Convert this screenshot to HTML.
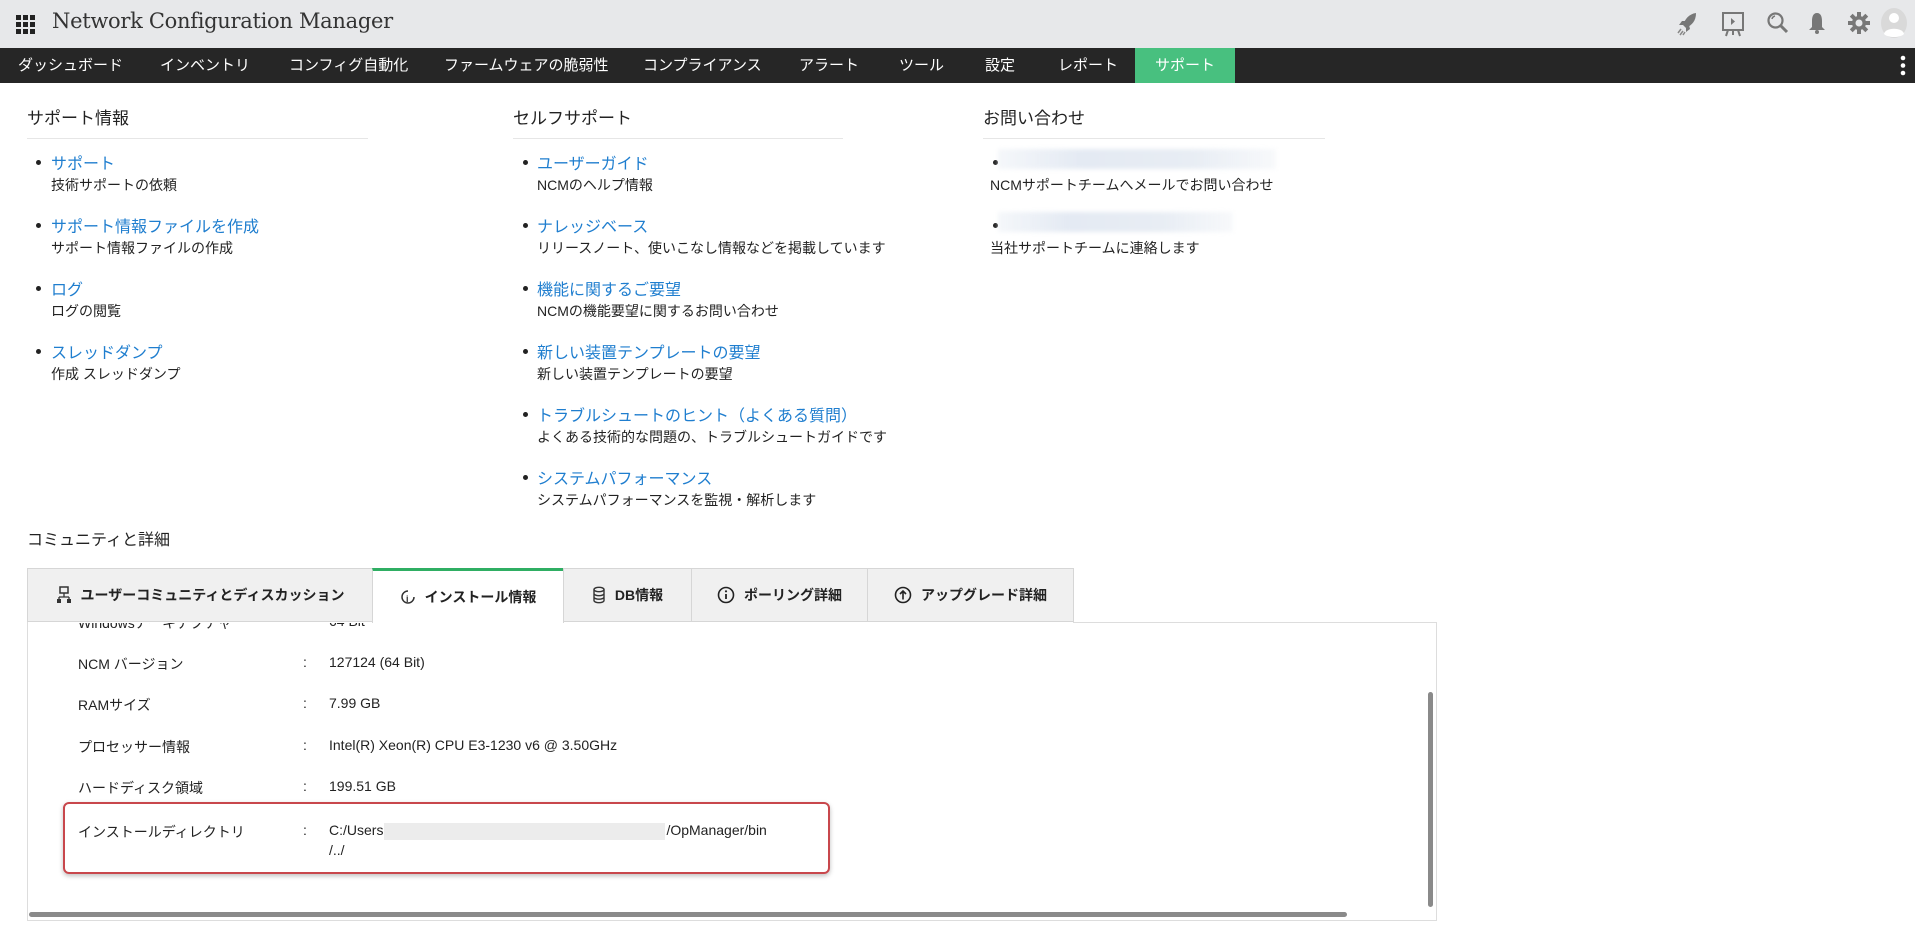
<!DOCTYPE html>
<html><head><meta charset="utf-8"><style>
*{margin:0;padding:0;box-sizing:border-box}
body{width:1915px;height:948px;overflow:hidden;background:#fff;font-family:"Liberation Sans","Noto Sans CJK JP",sans-serif;color:#222;position:relative}
.hdr{position:absolute;left:0;top:0;width:1915px;height:48px;background:#e7e8ea}
.title{position:absolute;left:52px;top:9px;font-family:"DejaVu Serif","Liberation Serif",serif;font-size:21px;font-weight:300;color:#333;letter-spacing:-0.3px}
.grid{position:absolute;left:16px;top:15px;width:19px;height:19px}
.grid i{position:absolute;width:5px;height:5px;background:#222}
.nav{position:absolute;left:0;top:48px;width:1915px;height:35px;background:#262626}
.nav span{position:absolute;top:0;height:35px;line-height:35px;color:#fff;font-size:15px}
.nav .act{background:#48c07f;text-align:center;width:100px;left:1135px}
.sec{position:absolute;font-size:17px;color:#222}
.line{position:absolute;height:1px;background:#e6e6e6}
.lk{position:absolute;font-size:16px;color:#1f7ecf}
.ds{position:absolute;font-size:14px;color:#222}
.bl{position:absolute;width:5px;height:5px;border-radius:50%;background:#222}
.blur{position:absolute;height:20px;background:linear-gradient(90deg,rgba(238,242,247,.6),#e4eaf3 30%,#e8edf4 70%,rgba(240,243,247,.5));filter:blur(2px)}
.tab{position:absolute;top:568px;height:54px;background:#f0f0f0;border:1px solid #d6d6d6;font-size:14px;font-weight:bold;color:#222;display:flex;align-items:center;justify-content:center;gap:9px}
.tab.a{background:#fff;border-top:3px solid #2fae63;border-bottom:none;height:55px}
.box{position:absolute;left:27px;top:622px;width:1410px;height:299px;border:1px solid #ddd;border-top:none}
.lb{position:absolute;left:78px;font-size:14px;color:#222}
.co{position:absolute;left:303px;font-size:14px}
.va{position:absolute;left:329px;font-size:14px;color:#222}
</style></head><body>
<div class="hdr">
<div class="grid"><i style="left:0;top:0"></i><i style="left:7px;top:0"></i><i style="left:14px;top:0"></i><i style="left:0;top:7px"></i><i style="left:7px;top:7px"></i><i style="left:14px;top:7px"></i><i style="left:0;top:14px"></i><i style="left:7px;top:14px"></i><i style="left:14px;top:14px"></i></div>
<div class="title">Network Configuration Manager</div>
<svg style="position:absolute;left:1676px;top:11px" width="24" height="26" viewBox="0 0 24 26"><path d="M20 2 C13 3 9 8 7 14 L10 17 C16 14 20 10 20 2Z" fill="#777"/><path d="M7 14 L3 14 L6 10 L10 10Z M10 17 L10 21 L14 18 L13 14Z" fill="#777"/><path d="M5 18 L2 22 M7 20 L4 24 M9 21 L7 24" stroke="#888" stroke-width="1.5"/></svg>
<svg style="position:absolute;left:1720px;top:10px" width="26" height="28" viewBox="0 0 26 28"><rect x="3" y="3" width="20" height="17" fill="none" stroke="#777" stroke-width="2"/><path d="M11 8 L15 11.5 L11 15Z" fill="#777"/><path d="M2 3 H24 M8 20 L6 26 M18 20 L20 26 M13 20 V25" stroke="#777" stroke-width="2"/></svg>
<svg style="position:absolute;left:1766px;top:11px" width="24" height="24" viewBox="0 0 24 24"><circle cx="9.5" cy="9.5" r="7" fill="none" stroke="#777" stroke-width="2.2"/><path d="M14.5 14.5 L21 21" stroke="#777" stroke-width="3"/><path d="M6 8 A4 4 0 0 1 9 5" stroke="#777" stroke-width="1.5" fill="none"/></svg>
<svg style="position:absolute;left:1808px;top:11px" width="18" height="24" viewBox="0 0 18 24"><path d="M9 2 C5 2 4 6 4 10 L4 16 L1 19 L17 19 L14 16 L14 10 C14 6 13 2 9 2Z" fill="#777"/><circle cx="9" cy="21" r="2" fill="#777"/></svg>
<svg style="position:absolute;left:1847px;top:11px" width="24" height="24" viewBox="0 0 24 24"><g fill="#777"><circle cx="12" cy="12" r="7"/><rect x="10" y="1" width="4" height="22"/><rect x="1" y="10" width="22" height="4"/><rect x="10" y="1" width="4" height="22" transform="rotate(45 12 12)"/><rect x="10" y="1" width="4" height="22" transform="rotate(-45 12 12)"/></g><circle cx="12" cy="12" r="3.5" fill="#e7e8ea"/></svg>
<svg style="position:absolute;left:1880px;top:7px" width="28" height="32" viewBox="0 0 28 32"><ellipse cx="14" cy="16" rx="13" ry="15" fill="#d9d9d9"/><circle cx="14" cy="11" r="5" fill="#fff"/><path d="M4 27 C5 20 23 20 24 27 C20 31 8 31 4 27Z" fill="#fff"/></svg>
</div>
<div class="nav">
<span style="left:18px">ダッシュボード</span><span style="left:160px">インベントリ</span><span style="left:289px">コンフィグ自動化</span><span style="left:444px">ファームウェアの脆弱性</span><span style="left:643px">コンプライアンス</span><span style="left:799px">アラート</span><span style="left:899px">ツール</span><span style="left:985px">設定</span><span style="left:1058px">レポート</span><span class="act">サポート</span>
<span style="left:1900px;top:0;width:5px"><svg width="6" height="35" viewBox="0 0 6 35"><circle cx="3" cy="10" r="2.3" fill="#fff"/><circle cx="3" cy="17.5" r="2.3" fill="#fff"/><circle cx="3" cy="25" r="2.3" fill="#fff"/></svg></span>
</div>

<div class="sec" style="left:27px;top:104px">サポート情報</div><div class="line" style="left:27px;top:138px;width:341px"></div>
<div class="sec" style="left:513px;top:104px">セルフサポート</div><div class="line" style="left:513px;top:138px;width:330px"></div>
<div class="sec" style="left:983px;top:104px">お問い合わせ</div><div class="line" style="left:983px;top:138px;width:342px"></div>

<div class="bl" style="left:36px;top:160px"></div><div class="lk" style="left:51px;top:150px">サポート</div><div class="ds" style="left:51px;top:175px">技術サポートの依頼</div>
<div class="bl" style="left:36px;top:223px"></div><div class="lk" style="left:51px;top:213px">サポート情報ファイルを作成</div><div class="ds" style="left:51px;top:238px">サポート情報ファイルの作成</div>
<div class="bl" style="left:36px;top:286px"></div><div class="lk" style="left:51px;top:276px">ログ</div><div class="ds" style="left:51px;top:301px">ログの閲覧</div>
<div class="bl" style="left:36px;top:349px"></div><div class="lk" style="left:51px;top:339px">スレッドダンプ</div><div class="ds" style="left:51px;top:364px">作成 スレッドダンプ</div>

<div class="bl" style="left:523px;top:160px"></div><div class="lk" style="left:537px;top:150px">ユーザーガイド</div><div class="ds" style="left:537px;top:175px">NCMのヘルプ情報</div>
<div class="bl" style="left:523px;top:223px"></div><div class="lk" style="left:537px;top:213px">ナレッジベース</div><div class="ds" style="left:537px;top:238px">リリースノート、使いこなし情報などを掲載しています</div>
<div class="bl" style="left:523px;top:286px"></div><div class="lk" style="left:537px;top:276px">機能に関するご要望</div><div class="ds" style="left:537px;top:301px">NCMの機能要望に関するお問い合わせ</div>
<div class="bl" style="left:523px;top:349px"></div><div class="lk" style="left:537px;top:339px">新しい装置テンプレートの要望</div><div class="ds" style="left:537px;top:364px">新しい装置テンプレートの要望</div>
<div class="bl" style="left:523px;top:412px"></div><div class="lk" style="left:537px;top:402px">トラブルシュートのヒント（よくある質問）</div><div class="ds" style="left:537px;top:427px">よくある技術的な問題の、トラブルシュートガイドです</div>
<div class="bl" style="left:523px;top:475px"></div><div class="lk" style="left:537px;top:465px">システムパフォーマンス</div><div class="ds" style="left:537px;top:490px">システムパフォーマンスを監視・解析します</div>

<div class="bl" style="left:993px;top:160px"></div><div class="blur" style="left:998px;top:149px;width:278px"></div><div class="ds" style="left:990px;top:175px">NCMサポートチームへメールでお問い合わせ</div>
<div class="bl" style="left:993px;top:223px"></div><div class="blur" style="left:998px;top:212px;width:235px"></div><div class="ds" style="left:990px;top:238px">当社サポートチームに連絡します</div>

<div class="sec" style="left:27px;top:526px;font-size:16px">コミュニティと詳細</div>

<div class="tab" style="left:27px;width:346px"><svg width="16" height="18" viewBox="0 0 16 18"><rect x="4" y="1" width="8" height="6" fill="none" stroke="#333" stroke-width="1.5"/><path d="M8 7 V11 M3 11 H13 M3 11 V13 M13 11 V13" stroke="#333" stroke-width="1.3" fill="none"/><rect x="1" y="13" width="4" height="4" fill="#333"/><rect x="11" y="13" width="4" height="4" fill="#333"/></svg>ユーザーコミュニティとディスカッション</div>
<div class="tab a" style="left:372px;width:192px"><svg width="16" height="18" viewBox="0 0 16 18"><path d="M14 9 A6 6 0 1 1 8 3" fill="none" stroke="#333" stroke-width="1.5"/><text x="6" y="14" font-size="9" font-weight="bold" font-family="Liberation Sans" fill="#333">i</text></svg>インストール情報</div>
<div class="tab" style="left:563px;width:129px"><svg width="14" height="18" viewBox="0 0 14 18"><ellipse cx="7" cy="3.5" rx="5" ry="2.2" fill="none" stroke="#333" stroke-width="1.4"/><path d="M2 3.5 V14.5 A5 2.2 0 0 0 12 14.5 V3.5 M2 7.5 A5 2.2 0 0 0 12 7.5 M2 11 A5 2.2 0 0 0 12 11" fill="none" stroke="#333" stroke-width="1.4"/></svg>DB情報</div>
<div class="tab" style="left:691px;width:177px"><svg width="18" height="18" viewBox="0 0 18 18"><circle cx="9" cy="9" r="7.5" fill="none" stroke="#222" stroke-width="1.6"/><path d="M9 8 V13" stroke="#222" stroke-width="1.8"/><circle cx="9" cy="5.3" r="1.1" fill="#222"/></svg>ポーリング詳細</div>
<div class="tab" style="left:867px;width:207px"><svg width="18" height="18" viewBox="0 0 18 18"><circle cx="9" cy="9" r="7.5" fill="none" stroke="#222" stroke-width="1.6"/><path d="M9 13.5 V5 M6 8 L9 5 L12 8" stroke="#222" stroke-width="1.6" fill="none"/></svg>アップグレード詳細</div>

<div class="box"></div>
<div style="position:absolute;left:1073px;top:622px;width:364px;height:1px;background:#ddd"></div>
<div style="position:absolute;left:78px;top:623px;width:400px;height:8px;overflow:hidden;font-size:14px"><span style="position:absolute;left:0;top:-10px">Windowsアーキテクチャ</span><span style="position:absolute;left:251px;top:-10px">64 Bit</span></div>
<div class="lb" style="top:654px">NCM バージョン</div><div class="co" style="top:654px">:</div><div class="va" style="top:654px">127124 (64 Bit)</div>
<div class="lb" style="top:695px">RAMサイズ</div><div class="co" style="top:695px">:</div><div class="va" style="top:695px">7.99 GB</div>
<div class="lb" style="top:737px">プロセッサー情報</div><div class="co" style="top:737px">:</div><div class="va" style="top:737px">Intel(R) Xeon(R) CPU E3-1230 v6 @ 3.50GHz</div>
<div class="lb" style="top:778px">ハードディスク領域</div><div class="co" style="top:778px">:</div><div class="va" style="top:778px">199.51 GB</div>
<div style="position:absolute;left:63px;top:802px;width:767px;height:72px;border:2px solid #c8474c;border-radius:6px;box-shadow:0 2px 5px rgba(0,0,0,.25)"></div>
<div class="lb" style="top:822px">インストールディレクトリ</div><div class="co" style="top:822px">:</div><div class="va" style="top:822px">C:/Users<span style="display:inline-block;width:281px;height:17px;background:#ececec;vertical-align:middle;margin:0 1px"></span>/OpManager/bin</div>
<div class="va" style="top:842px">/../</div>
<div style="position:absolute;left:1428px;top:692px;width:5px;height:215px;background:#8a8a8a;border-radius:3px"></div>
<div style="position:absolute;left:29px;top:912px;width:1318px;height:5px;background:#8a8a8a;border-radius:3px"></div>
</body></html>
